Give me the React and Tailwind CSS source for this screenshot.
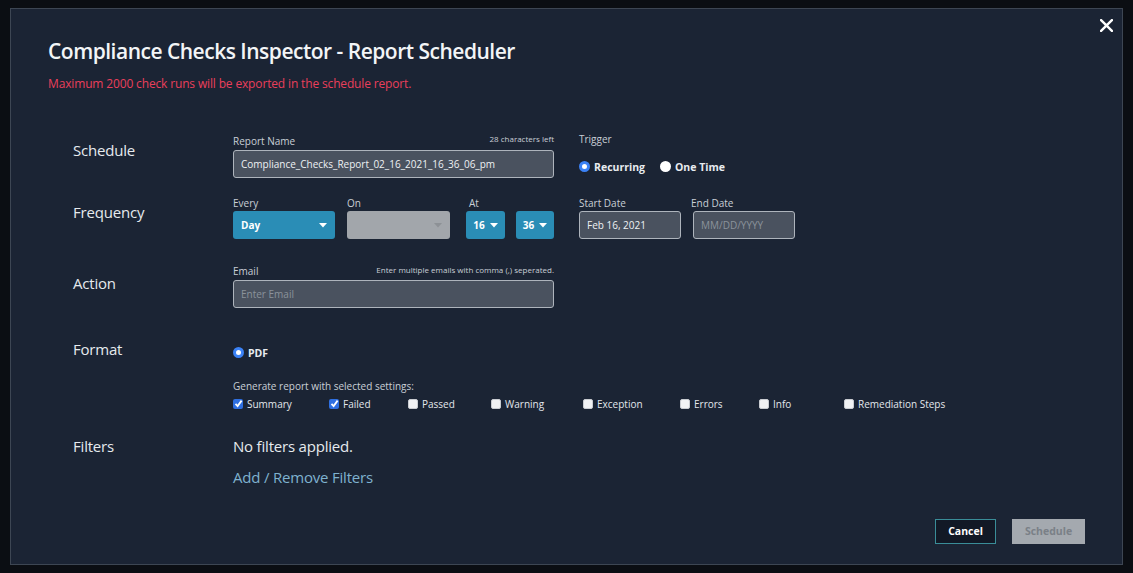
import React from "react";

const font = { fontFamily: '"Open Sans", "Noto Sans", sans-serif' };

function Caret() {
  return (
    <svg width="8" height="5" viewBox="0 0 8 5" className="shrink-0">
      <path d="M0 0 L8 0 L4 4.5 Z" fill="currentColor" />
    </svg>
  );
}

function Radio({ checked, label }) {
  return (
    <div className="flex items-center gap-[4px]">
      {checked ? (
        <span className="w-[11px] h-[11px] rounded-full border-[3px] border-[#3b82f6] bg-white" />
      ) : (
        <span className="w-[11px] h-[11px] rounded-full bg-white" />
      )}
      <span className="text-[10.5px] font-bold text-[#e8ecf0] leading-[14px] mt-[2px]">{label}</span>
    </div>
  );
}

function Check({ checked, label, w }) {
  return (
    <div className={`flex items-center gap-[4px] ${w}`}>
      {checked ? (
        <span className="w-[10px] h-[10px] rounded-[2px] bg-[#2f6fe0] flex items-center justify-center">
          <svg width="9" height="9" viewBox="0 0 9 9">
            <path d="M1.5 4.8 L3.6 7 L7.6 1.6" stroke="white" strokeWidth="1.8" fill="none" />
          </svg>
        </span>
      ) : (
        <span className="w-[10px] h-[10px] rounded-[2px] bg-[#f1f2f4] border border-[#c9ccd1]" />
      )}
      <span className="text-[10px] text-[#e3e7ec] leading-[14px] mt-[1px]">{label}</span>
    </div>
  );
}

function FieldLabel({ children, className = "" }) {
  return <div className={`text-[10px] leading-[14px] text-[#c9cfd6] ${className}`}>{children}</div>;
}

function Select({ value, w, disabled }) {
  return (
    <div
      className={`h-[28px] ${w} rounded-[3px] flex items-center justify-between pl-[8px] pr-[8px] ${
        disabled ? "bg-[#a2a6ab] text-[#8d9196]" : "bg-[#2a8db6] text-white"
      }`}
    >
      <span className="text-[10px] font-bold">{value}</span>
      <Caret />
    </div>
  );
}

function SmallSelect({ value, w }) {
  return (
    <div className={`h-[28px] ${w} rounded-[3px] flex items-center justify-center gap-[5px] bg-[#2a8db6] text-white`}>
      <span className="text-[10px] font-bold">{value}</span>
      <Caret />
    </div>
  );
}

function SectionLabel({ children, className = "" }) {
  return (
    <div className={`w-[160px] shrink-0 text-[15px] tracking-[-0.2px] leading-[22px] text-[#e6eaee] ${className}`}>
      {children}
    </div>
  );
}

export default function App() {
  return (
    <div style={font} className="w-[1133px] h-[573px] bg-[#0b0e13] pt-[8px] pl-[10px] overflow-hidden">
      <div className="relative w-[1113px] h-[557px] bg-[#1b2434] border border-[#3d4653] flex flex-col">
        <button className="absolute right-[9px] top-[10px] text-white">
          <svg width="13" height="13" viewBox="0 0 12 12">
            <path d="M1 1 L11 11 M11 1 L1 11" stroke="white" strokeWidth="2.2" strokeLinecap="round" />
          </svg>
        </button>

        <div className="pl-[37px] pt-[27px]">
          <h1 className="text-[21px] tracking-[-0.5px] leading-[30px] font-semibold text-[#f3f5f7]">
            Compliance Checks Inspector - Report Scheduler
          </h1>
          <p className="mt-[10px] text-[12px] tracking-[-0.15px] leading-[16px] text-[#ea3f5b]">
            Maximum 2000 check runs will be exported in the schedule report.
          </p>
        </div>

        <div className="pl-[62px] mt-[41px] flex flex-col">
          {/* Schedule */}
          <div className="flex">
            <SectionLabel className="pt-[6px]">Schedule</SectionLabel>
            <div className="w-[321px] shrink-0">
              <div className="flex justify-between items-end">
                <FieldLabel>Report Name</FieldLabel>
                <span className="text-[8px] leading-[12px] text-[#c9cfd6] mb-[3px]">28 characters left</span>
              </div>
              <div className="mt-[2px] h-[28px] rounded-[3px] bg-[#4a525f] border border-[#aeb4bc] flex items-center px-[7px]">
                <span className="text-[10px] text-[#eef1f4]">Compliance_Checks_Report_02_16_2021_16_36_06_pm</span>
              </div>
            </div>
            <div className="ml-[25px] -mt-[1px]">
              <FieldLabel>Trigger</FieldLabel>
              <div className="flex gap-[15px] mt-[12px]">
                <Radio checked label="Recurring" />
                <Radio label="One Time" />
              </div>
            </div>
          </div>

          {/* Frequency */}
          <div className="flex mt-[18px]">
            <SectionLabel className="pt-[5px]">Frequency</SectionLabel>
            <div className="flex">
              <div>
                <FieldLabel>Every</FieldLabel>
                <div className="mt-[1px]">
                  <Select value="Day" w="w-[102px]" />
                </div>
              </div>
              <div className="ml-[12px]">
                <FieldLabel>On</FieldLabel>
                <div className="mt-[1px]">
                  <Select value="" w="w-[103px]" disabled />
                </div>
              </div>
              <div className="ml-[16px]">
                <FieldLabel className="pl-[3px]">At</FieldLabel>
                <div className="mt-[1px] flex gap-[11px]">
                  <SmallSelect value="16" w="w-[39px]" />
                  <SmallSelect value="36" w="w-[38px]" />
                </div>
              </div>
              <div className="ml-[25px]">
                <FieldLabel>Start Date</FieldLabel>
                <div className="mt-[1px] w-[102px] h-[28px] rounded-[3px] bg-[#4a525f] border border-[#aeb4bc] flex items-center px-[7px]">
                  <span className="text-[10px] text-[#eef1f4]">Feb 16, 2021</span>
                </div>
              </div>
              <div className="ml-[10px]">
                <FieldLabel>End Date</FieldLabel>
                <div className="mt-[1px] ml-[2px] w-[102px] h-[28px] rounded-[3px] bg-[#4a525f] border border-[#aeb4bc] flex items-center px-[7px]">
                  <span className="text-[10px] text-[#8b929b]">MM/DD/YYYY</span>
                </div>
              </div>
            </div>
          </div>

          {/* Action */}
          <div className="flex mt-[25px]">
            <SectionLabel className="pt-[8px]">Action</SectionLabel>
            <div className="w-[321px] shrink-0">
              <div className="flex justify-between items-end">
                <FieldLabel>Email</FieldLabel>
                <span className="text-[8px] leading-[12px] text-[#c9cfd6] mb-[2px]">
                  Enter multiple emails with comma (,) seperated.
                </span>
              </div>
              <div className="mt-[2px] h-[28px] rounded-[3px] bg-[#4a525f] border border-[#aeb4bc] flex items-center px-[7px]">
                <span className="text-[10px] text-[#8b929b]">Enter Email</span>
              </div>
            </div>
          </div>

          {/* Format */}
          <div className="flex mt-[30px]">
            <SectionLabel>Format</SectionLabel>
            <div>
              <div className="pt-[6px]">
                <Radio checked label="PDF" />
              </div>
              <div className="mt-[19px] text-[10px] leading-[14px] text-[#c9cfd6]">
                Generate report with selected settings:
              </div>
              <div className="flex mt-[3px]">
                <Check checked label="Summary" w="w-[96px]" />
                <Check checked label="Failed" w="w-[79px]" />
                <Check label="Passed" w="w-[83px]" />
                <Check label="Warning" w="w-[92px]" />
                <Check label="Exception" w="w-[97px]" />
                <Check label="Errors" w="w-[79px]" />
                <Check label="Info" w="w-[85px]" />
                <Check label="Remediation Steps" w="w-[120px]" />
              </div>
            </div>
          </div>

          {/* Filters */}
          <div className="flex mt-[24px]">
            <SectionLabel>Filters</SectionLabel>
            <div>
              <div className="text-[15px] tracking-[-0.2px] leading-[22px] text-[#e6eaee]">No filters applied.</div>
              <div className="mt-[9px] text-[15px] tracking-[-0.2px] leading-[22px] text-[#7fb2cf]">
                Add / Remove Filters
              </div>
            </div>
          </div>
        </div>

        <div className="mt-auto flex justify-end gap-[16px] pr-[37px] pb-[20px]">
          <button className="w-[61px] h-[25px] border border-[#3a8d98] bg-[#121926] text-[10.5px] font-bold text-white">
            Cancel
          </button>
          <button className="w-[73px] h-[25px] bg-[#a4a9af] text-[10.5px] font-bold text-[#7a8087]">
            Schedule
          </button>
        </div>
      </div>
    </div>
  );
}
